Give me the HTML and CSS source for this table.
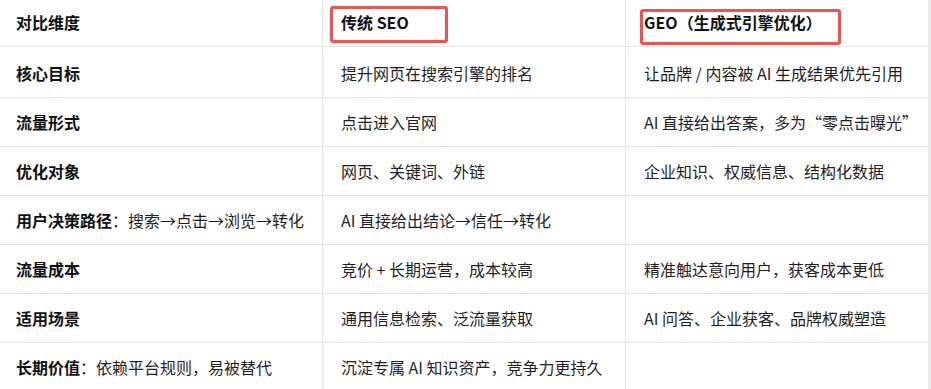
FILE: index.html
```html
<!DOCTYPE html>
<html lang="zh-CN">
<head>
<meta charset="utf-8">
<title>SEO vs GEO</title>
<link rel="stylesheet" href="styles.css">
</head>
<body>
<div class="wrap">
  <div class="grid">
    <div class="cell c1 head"><b>对比维度</b></div>
    <div class="cell c2 head"><b>传统 SEO</b></div>
    <div class="cell c3 head"><b>GEO（生成式引擎优化）</b></div>

    <div class="cell c1"><b>核心目标</b></div>
    <div class="cell c2">提升网页在搜索引擎的排名</div>
    <div class="cell c3">让品牌 / 内容被 AI 生成结果优先引用</div>

    <div class="cell c1"><b>流量形式</b></div>
    <div class="cell c2">点击进入官网</div>
    <div class="cell c3">AI 直接给出答案，多为“零点击曝光”</div>

    <div class="cell c1"><b>优化对象</b></div>
    <div class="cell c2">网页、关键词、外链</div>
    <div class="cell c3">企业知识、权威信息、结构化数据</div>

    <div class="cell c1"><span><b>用户决策路径</b>：搜索→点击→浏览→转化</span></div>
    <div class="cell c2">AI 直接给出结论→信任→转化</div>
    <div class="cell c3"></div>

    <div class="cell c1"><b>流量成本</b></div>
    <div class="cell c2">竞价 + 长期运营，成本较高</div>
    <div class="cell c3">精准触达意向用户，获客成本更低</div>

    <div class="cell c1"><b>适用场景</b></div>
    <div class="cell c2">通用信息检索、泛流量获取</div>
    <div class="cell c3">AI 问答、企业获客、品牌权威塑造</div>

    <div class="cell c1"><span><b>长期价值</b>：依赖平台规则，易被替代</span></div>
    <div class="cell c2">沉淀专属 AI 知识资产，竞争力更持久</div>
    <div class="cell c3"></div>
  </div>
  <div class="mark mark-seo"></div>
  <div class="mark mark-geo"></div>
</div>
</body>
</html>
```

FILE: styles.css
```css
html, body {
  margin: 0;
  padding: 0;
  background: #ffffff;
}

body {
  font-family: "Noto Sans CJK SC", "Noto Sans", sans-serif;
  font-size: 16px;
  color: #1f1f1f;
  overflow: hidden;
}

.wrap {
  position: relative;
  width: 931px;
  height: 389px;
  overflow: hidden;
}

.grid {
  display: grid;
  grid-template-columns: 323px 303px 302px;
  grid-auto-rows: 49px;
  width: 928px;
  border-right: 3px solid #ebebeb;
  height: 389px;
  align-content: start;
}

.cell {
  display: flex;
  align-items: center;
  box-sizing: border-box;
  border-bottom: 1px solid #e6e6e6;
  padding-top: 0;
  white-space: nowrap;
  line-height: 20px;
}

.cell.head {
  height: 47px;
  padding-bottom: 2px;
}

.c1 {
  border-right: 1px solid #e6e6e6;
  padding-left: 16px;
}

.c2 {
  border-right: 1px solid #e6e6e6;
  padding-left: 18px;
}

.c3 {
  padding-left: 18px;
}

.cell b {
  font-weight: 700;
  color: #111111;
}

.grid > .cell:nth-child(n+4) {
  height: 49px;
}

.mark {
  position: absolute;
  box-sizing: border-box;
  border: 3px solid #f05252;
  border-radius: 3px;
}

.mark-seo {
  left: 330px;
  top: 6px;
  width: 118px;
  height: 37px;
}

.mark-geo {
  left: 640px;
  top: 9px;
  width: 201px;
  height: 36px;
}
```
